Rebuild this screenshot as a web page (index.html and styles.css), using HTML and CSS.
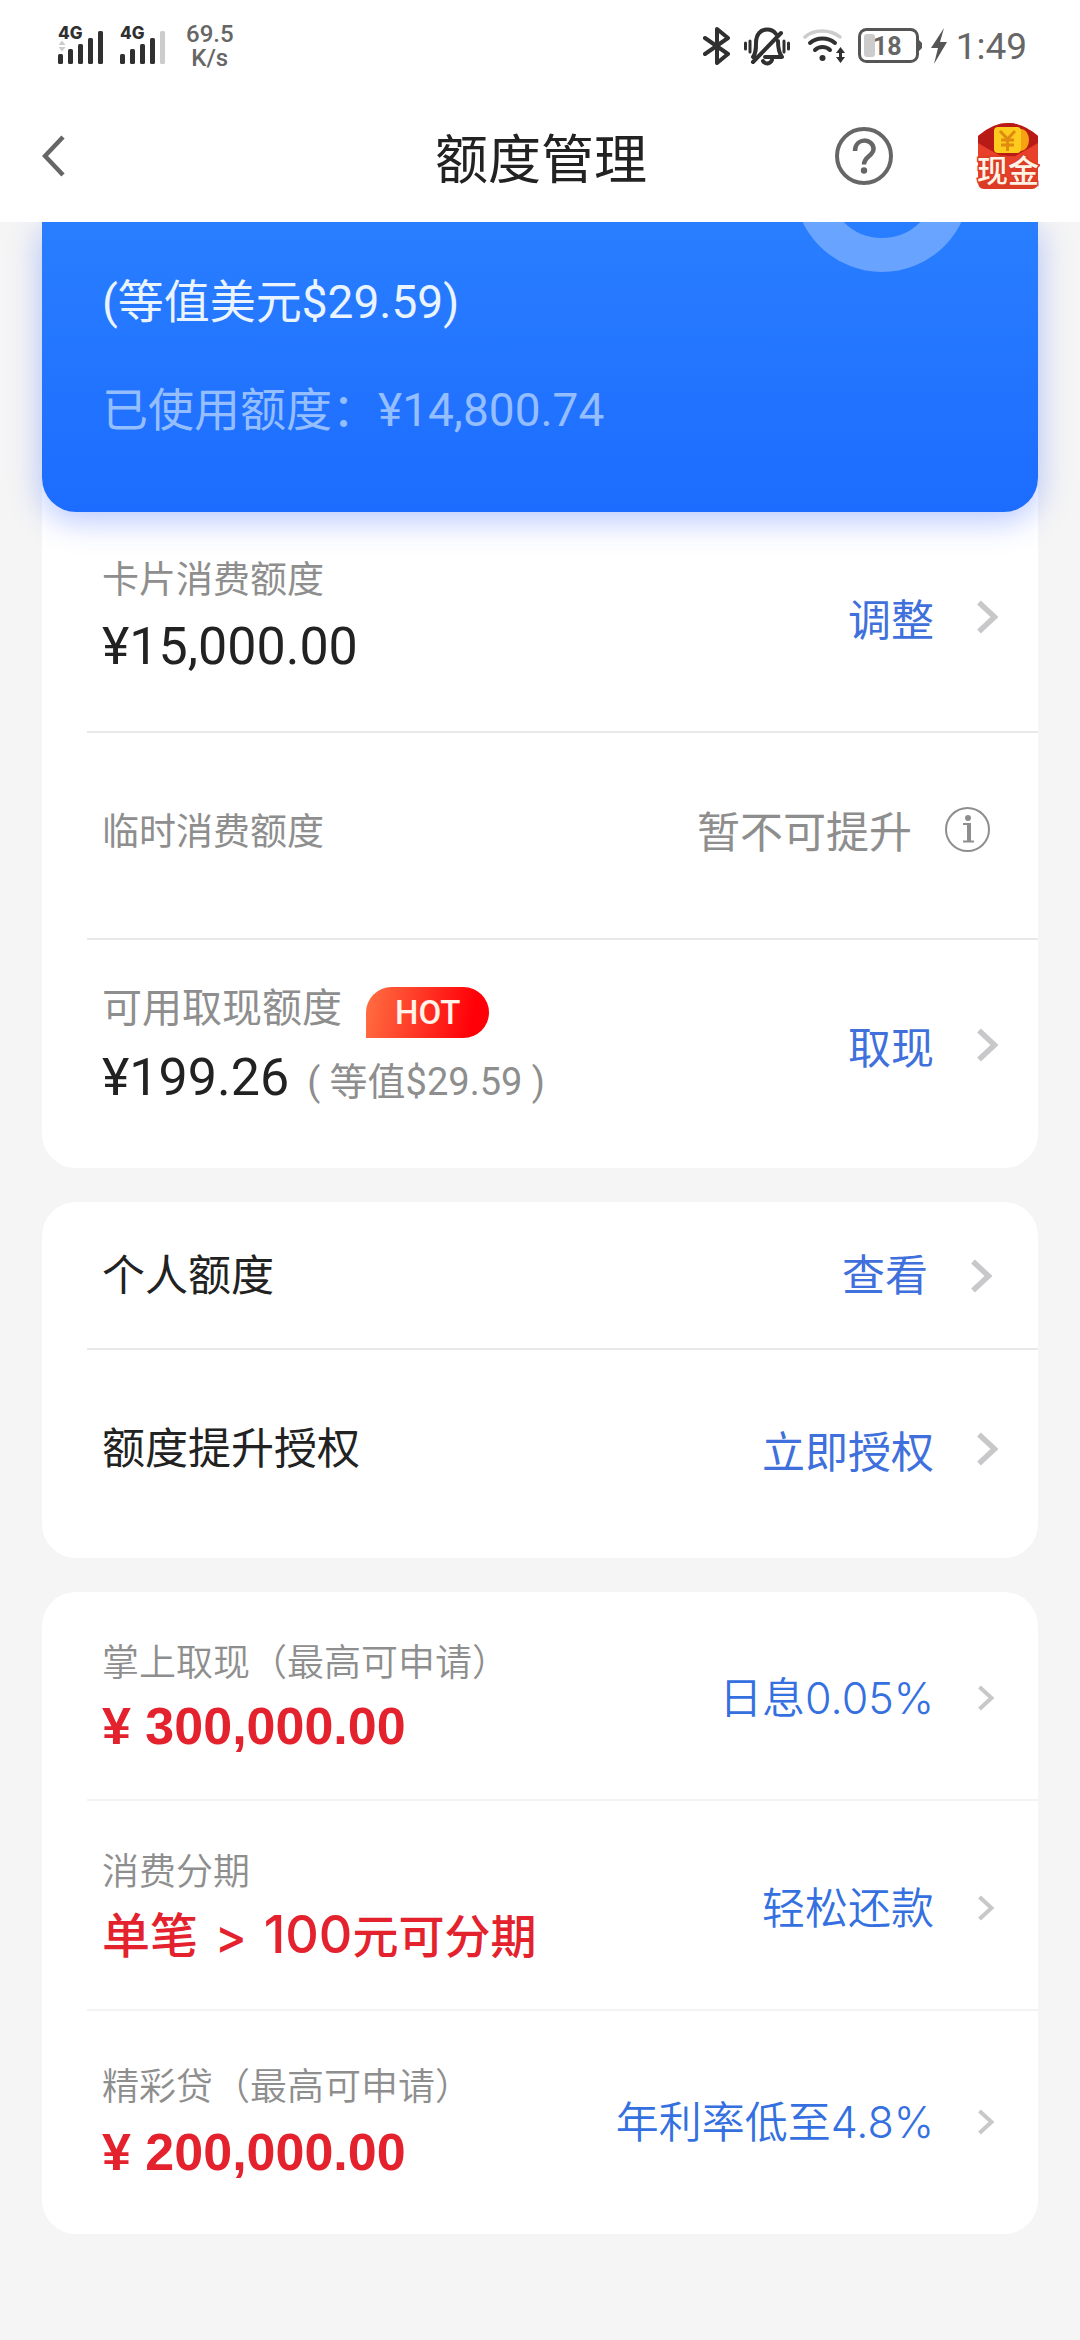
FILE: index.html
```html
<!DOCTYPE html>
<html lang="zh-CN">
<head>
<meta charset="utf-8">
<meta name="viewport" content="width=device-width, initial-scale=1">
<title>额度管理</title>
<link rel="stylesheet" href="styles.css">
</head>
<body>
<svg class="defs" width="0" height="0" aria-hidden="true">
  <symbol id="chevron" viewBox="0 0 21 34"><path d="M2 2.500L17.500 17L2 31.500" fill="none" stroke="#c8c8ca" stroke-width="5.500"/></symbol>
  <symbol id="chevron-thin" viewBox="0 0 21 34"><path d="M2.500 6L14.500 17L2.500 28" fill="none" stroke="#c8c8ca" stroke-width="4"/></symbol>
</svg>

<header class="top">
  <div class="status">
    <div class="status-side">
      <svg width="48" height="54" viewBox="0 -6 48 54" aria-label="4G">
        <text x="0" y="14" class="net">4G</text>
        <path d="M0.500 20L4 15.500L7.500 20ZM0.500 22L4 26.500L7.500 22Z" fill="#ccc"/>
        <g fill="#303030"><rect x="0" y="29" width="5" height="10" rx="1.500"/><rect x="10" y="24" width="5" height="15" rx="1.500"/><rect x="20" y="19" width="5" height="20" rx="1.500"/><rect x="30" y="13" width="5" height="26" rx="1.500"/><rect x="40" y="6" width="5" height="33" rx="1.500"/></g>
      </svg>
      <svg width="48" height="54" viewBox="0 -6 48 54" aria-label="4G">
        <text x="0" y="14" class="net">4G</text>
        <g fill="#303030"><rect x="0" y="29" width="5" height="10" rx="1.500"/><rect x="10" y="24" width="5" height="15" rx="1.500"/><rect x="20" y="19" width="5" height="20" rx="1.500"/><rect x="30" y="13" width="5" height="26" rx="1.500"/></g><rect x="40" y="6" width="5" height="33" rx="1.500" fill="#ccc"/>
      </svg>
      <div class="speed">69.5<br>K/s</div>
    </div>
    <div class="status-side status-right">
      <div class="radios">
        <svg width="28" height="40" viewBox="0 0 28 40" fill="none" stroke="#303030" stroke-width="4" stroke-linejoin="round" stroke-linecap="round"><path d="M2 12L25 28L14 37V3L25 12L2 28"/></svg>
        <svg width="46" height="40" viewBox="0 0 46 40" fill="none" stroke="#303030" stroke-width="4" stroke-linecap="round" stroke-linejoin="round">
          <path d="M9 31C12 27 12 23 12 17C12 8 17 3.500 23 3.500C27 3.500 30 5 32 8M34 15C34 23 35 27 38 31H21M19 35C21 38.500 26 38.500 28 34M9 36L37 7"/>
          <path d="M1.500 17V23M6 15V26M40 15V26M44.500 17V23" stroke-width="3"/>
        </svg>
        <svg width="42" height="36" viewBox="0 0 42 36" fill="none" stroke-width="3.500" stroke-linecap="round">
          <path d="M2 9C11 1 27 1 37 9" stroke="#ccc"/><path d="M7 15C14 9 25 9 32 15M12 22C16 18 23 18 27 22" stroke="#303030" stroke-width="4"/><circle cx="19.500" cy="30" r="3" fill="#303030"/><path d="M37.500 19L42 25H39V29H42L37.500 35L33 29H36V25H33Z" fill="#303030"/>
        </svg>
      </div>
      <svg width="64" height="36" viewBox="0 0 64 36">
        <rect x="1.500" y="1.500" width="58" height="32" rx="7" fill="none" stroke="#555" stroke-width="3"/><path d="M61 12L64 15V20L61 23Z" fill="#555"/><rect x="6" y="6" width="11" height="23" rx="3" fill="#ccc"/><text x="15" y="27" class="charge">18</text>
      </svg>
      <svg width="16" height="36" viewBox="0 0 16 36"><path d="M13 0L0 20H7L3 36L16 14H9Z" fill="#555"/></svg>
      <time class="clock">1:49</time>
    </div>
  </div>
  <nav class="nav">
    <button class="icon-button back" aria-label="返回"><svg width="24" height="42" viewBox="0 0 24 42"><path d="M21 2L3 21L21 40" fill="none" stroke="#666" stroke-width="4.500"/></svg></button>
    <h1 class="title">额度管理</h1>
    <div class="nav-tools">
      <button class="icon-button" aria-label="帮助"><svg width="58" height="58" viewBox="0 0 58 58"><circle cx="29" cy="29" r="27" fill="none" stroke="#666" stroke-width="4"/><path d="M20 24C20 10 38.500 11 38.500 22C38.500 29 29 29 29 37.500" fill="none" stroke="#666" stroke-width="4.500"/><circle cx="29" cy="43.500" r="3.200" fill="#666"/></svg></button>
      <button class="icon-button" aria-label="现金"><svg width="64" height="68" viewBox="0 0 64 68">
        <path d="M2 14Q32 -12 62 14V60Q62 67 56 67H8Q2 67 2 60Z" fill="#dc3c25"/><path d="M2 14Q32 -12 62 14V22L40 34H24L2 22Z" fill="#b81a16"/><path d="M2 21L26 35H38L62 21V60H2Z" fill="#e8402a"/><ellipse cx="45" cy="18" rx="8" ry="11" fill="#f5a312"/><rect x="18" y="5" width="27" height="26" rx="4" fill="#fdcb1d"/><path d="M24 9L31.500 17L39 9M31.500 17V29M25 18H38M25 23H38" fill="none" stroke="#e08a10" stroke-width="3"/><text x="1" y="60" class="cash">现金</text>
      </svg></button>
    </div>
  </nav>
</header>

<main class="page">
  <section class="panel panel-first">
    <div class="summary">
      <span class="ring"></span>
      <p class="summary-usd">(等值美元$29.59)</p>
      <p class="summary-used">已使用额度：¥14,800.74</p>
    </div>
    <div class="row row-card">
      <div><div class="label">卡片消费额度</div><div class="value">¥15,000.00</div></div>
      <a class="action" href="#adjust">调整<svg class="chev"><use href="#chevron"/></svg></a>
    </div>
    <div class="row row-temp">
      <div class="label">临时消费额度</div>
      <div class="action muted">暂不可提升<button class="icon-button" aria-label="说明"><svg width="45" height="45" viewBox="0 0 45 45"><circle cx="22.500" cy="22.500" r="21.500" fill="none" stroke="#8e8e8e" stroke-width="2"/><circle cx="23" cy="11" r="3" fill="#8e8e8e"/><path d="M18 16H26V33.500H29V35.500H18V33.500H22V18H18Z" fill="#8e8e8e"/></svg></button></div>
    </div>
    <div class="row row-withdraw">
      <div>
        <div class="label label-hot">可用取现额度<span class="hot">HOT</span></div>
        <div class="value">¥199.26<span class="value-note">( 等值$29.59 )</span></div>
      </div>
      <a class="action" href="#withdraw">取现<svg class="chev"><use href="#chevron"/></svg></a>
    </div>
  </section>

  <section class="panel">
    <div class="row row-personal">
      <div class="name">个人额度</div>
      <a class="action" href="#view">查看<svg class="chev"><use href="#chevron"/></svg></a>
    </div>
    <div class="row row-grant">
      <div class="name">额度提升授权</div>
      <a class="action" href="#grant">立即授权<svg class="chev"><use href="#chevron"/></svg></a>
    </div>
  </section>

  <section class="panel offers">
    <div class="row">
      <div><div class="label">掌上取现（最高可申请）</div><div class="value">¥ 300,000.00</div></div>
      <a class="action" href="#cash">日息0.05%<svg class="chev"><use href="#chevron-thin"/></svg></a>
    </div>
    <div class="row">
      <div><div class="label">消费分期</div><div class="value value-text">单笔 <span class="gt">&gt;</span> <span class="hundred">100</span><span class="unit">元可分期</span></div></div>
      <a class="action" href="#instalment">轻松还款<svg class="chev"><use href="#chevron-thin"/></svg></a>
    </div>
    <div class="row row-loan">
      <div><div class="label">精彩贷（最高可申请）</div><div class="value">¥ 200,000.00</div></div>
      <a class="action" href="#loan">年利率低至4.8%<svg class="chev"><use href="#chevron-thin"/></svg></a>
    </div>
  </section>
</main>
</body>
</html>
```
FILE: styles.css
```css
* { box-sizing: border-box; }

body {
  margin: 0;
  min-height: 100vh;
  background: #f5f5f5;
  color: #222;
  font-family: Roboto, "Noto Sans CJK SC", sans-serif;
}

.defs { display: block; height: 0; }
h1, p { margin: 0; font-weight: 400; }
svg { display: block; flex: none; }

.icon-button {
  padding: 0;
  border: 0;
  background: none;
  cursor: pointer;
}

/* Status bar and title bar */
.top {
  position: relative;
  z-index: 2;
  background: #fff;
}

.status {
  display: flex;
  justify-content: space-between;
  align-items: center;
  height: 92px;
  padding: 0 53px 0 58px;
}

.status-side {
  display: flex;
  align-items: center;
  gap: 14px;
}

.status-right { gap: 9px; }

.radios {
  display: flex;
  align-items: center;
  gap: 13px;
  margin-right: 4px;
}

.net { font: 800 17px Inter, sans-serif; fill: #303030; }
.charge { font: 700 25px Roboto, sans-serif; fill: #666; }

.speed {
  margin-left: 4px;
  font-size: 24px;
  font-weight: 500;
  line-height: 24px;
  text-align: center;
  color: #666;
}

.clock { font-size: 37px; color: #666; }

.nav {
  display: grid;
  grid-template-columns: 1fr auto 1fr;
  align-items: center;
  height: 130px;
  padding: 0 40px 2px 42px;
}

.back { justify-self: start; }

.title {
  font-family: "Noto Sans CJK SC", sans-serif;
  font-size: 53px;
  line-height: 72px;
}

.nav-tools {
  display: flex;
  justify-content: flex-end;
  align-items: center;
  gap: 83px;
}

.cash {
  font: 500 31px "Noto Sans CJK SC", sans-serif;
  fill: #fff3e6;
  stroke: #dc3c25;
  stroke-width: 3px;
  paint-order: stroke;
}

/* Panels */
.page {
  display: flex;
  flex-direction: column;
  gap: 34px;
  padding: 0 42px 40px;
}

.panel {
  background: #fff;
  border-radius: 34px;
}

.panel-first { border-radius: 0 0 34px 34px; }

.summary {
  position: relative;
  padding: 46px 60px 68px;
  border-radius: 0 0 34px 34px;
  background: linear-gradient(#297eff, #1c6cff);
  box-shadow: 0 8px 32px rgba(40, 90, 255, 0.35);
  font-size: 46px;
}

.ring {
  position: absolute;
  top: -126px;
  right: 68px;
  width: 176px;
  height: 176px;
  border: 34px solid rgba(255, 255, 255, 0.3);
  border-radius: 50%;
}

.summary-usd { line-height: 68px; color: #eaf4ff; }
.summary-used { margin-top: 40px; line-height: 68px; color: #94beff; }

.row {
  display: flex;
  justify-content: space-between;
  align-items: center;
  margin-left: 45px;
  padding: 40px 40px 35px 15px;
}

.row + .row { border-top: 2px solid #e9e9e9; }
.row-card { padding-top: 35px; padding-bottom: 44px; }
.row-temp { padding: 66px 48px 79px 15px; }
.row-withdraw { padding-top: 32px; padding-bottom: 50px; }
.row-personal { padding: 44px 46px 42px 15px; }
.row-grant { padding-top: 69px; padding-bottom: 79px; }
.row-loan { padding-top: 43px; padding-bottom: 44px; }

.label, .action { font-family: "Noto Sans CJK SC", sans-serif; }
.label { font-size: 37px; line-height: 60px; color: #8e8e8e; }
.value { font-size: 52px; line-height: 80px; }
.name { font-size: 43px; line-height: 60px; }

.label-hot {
  display: flex;
  align-items: flex-end;
  gap: 24px;
  font-size: 40px;
  line-height: 66px;
}

.hot {
  padding: 0 29px;
  border-radius: 26px 26px 26px 0;
  background: linear-gradient(100deg, #ff7043, #ff0008 85%);
  font: 500 33px/51px Roboto, sans-serif;
  color: #fff3ea;
}

.value-note {
  margin-left: 18px;
  font-size: 38px;
  line-height: 40px;
  color: #8e8e8e;
}

.action {
  display: flex;
  align-items: center;
  gap: 43px;
  font-size: 43px;
  line-height: 60px;
  color: #4070dc;
  text-decoration: none;
}

.row-personal .action { font-family: Roboto, "Noto Sans CJK SC", sans-serif; }
.muted { gap: 33px; color: #8e8e8e; }
.chev { width: 21px; height: 34px; }

/* Offer rows */
.offers .row + .row { border-color: #f3f3f3; }
.offers .label { line-height: 56px; font-weight: 350; }
.offers .row-loan .label { line-height: 60px; }
.offers .action { font-family: Inter, "Noto Sans CJK SC", sans-serif; font-weight: 350; color: #3570e0; }

.offers .value {
  font-family: "Liberation Sans", "Noto Sans CJK SC", sans-serif;
  font-weight: 700;
  line-height: 76px;
  color: #e3222e;
}

.offers .value-text {
  font-family: Inter, "Noto Sans CJK SC", sans-serif;
  font-size: 48px;
  font-weight: 500;
}

.gt { margin: 0 4px; }
.hundred { font-size: 52px; }
.unit { font-size: 46px; }
```
